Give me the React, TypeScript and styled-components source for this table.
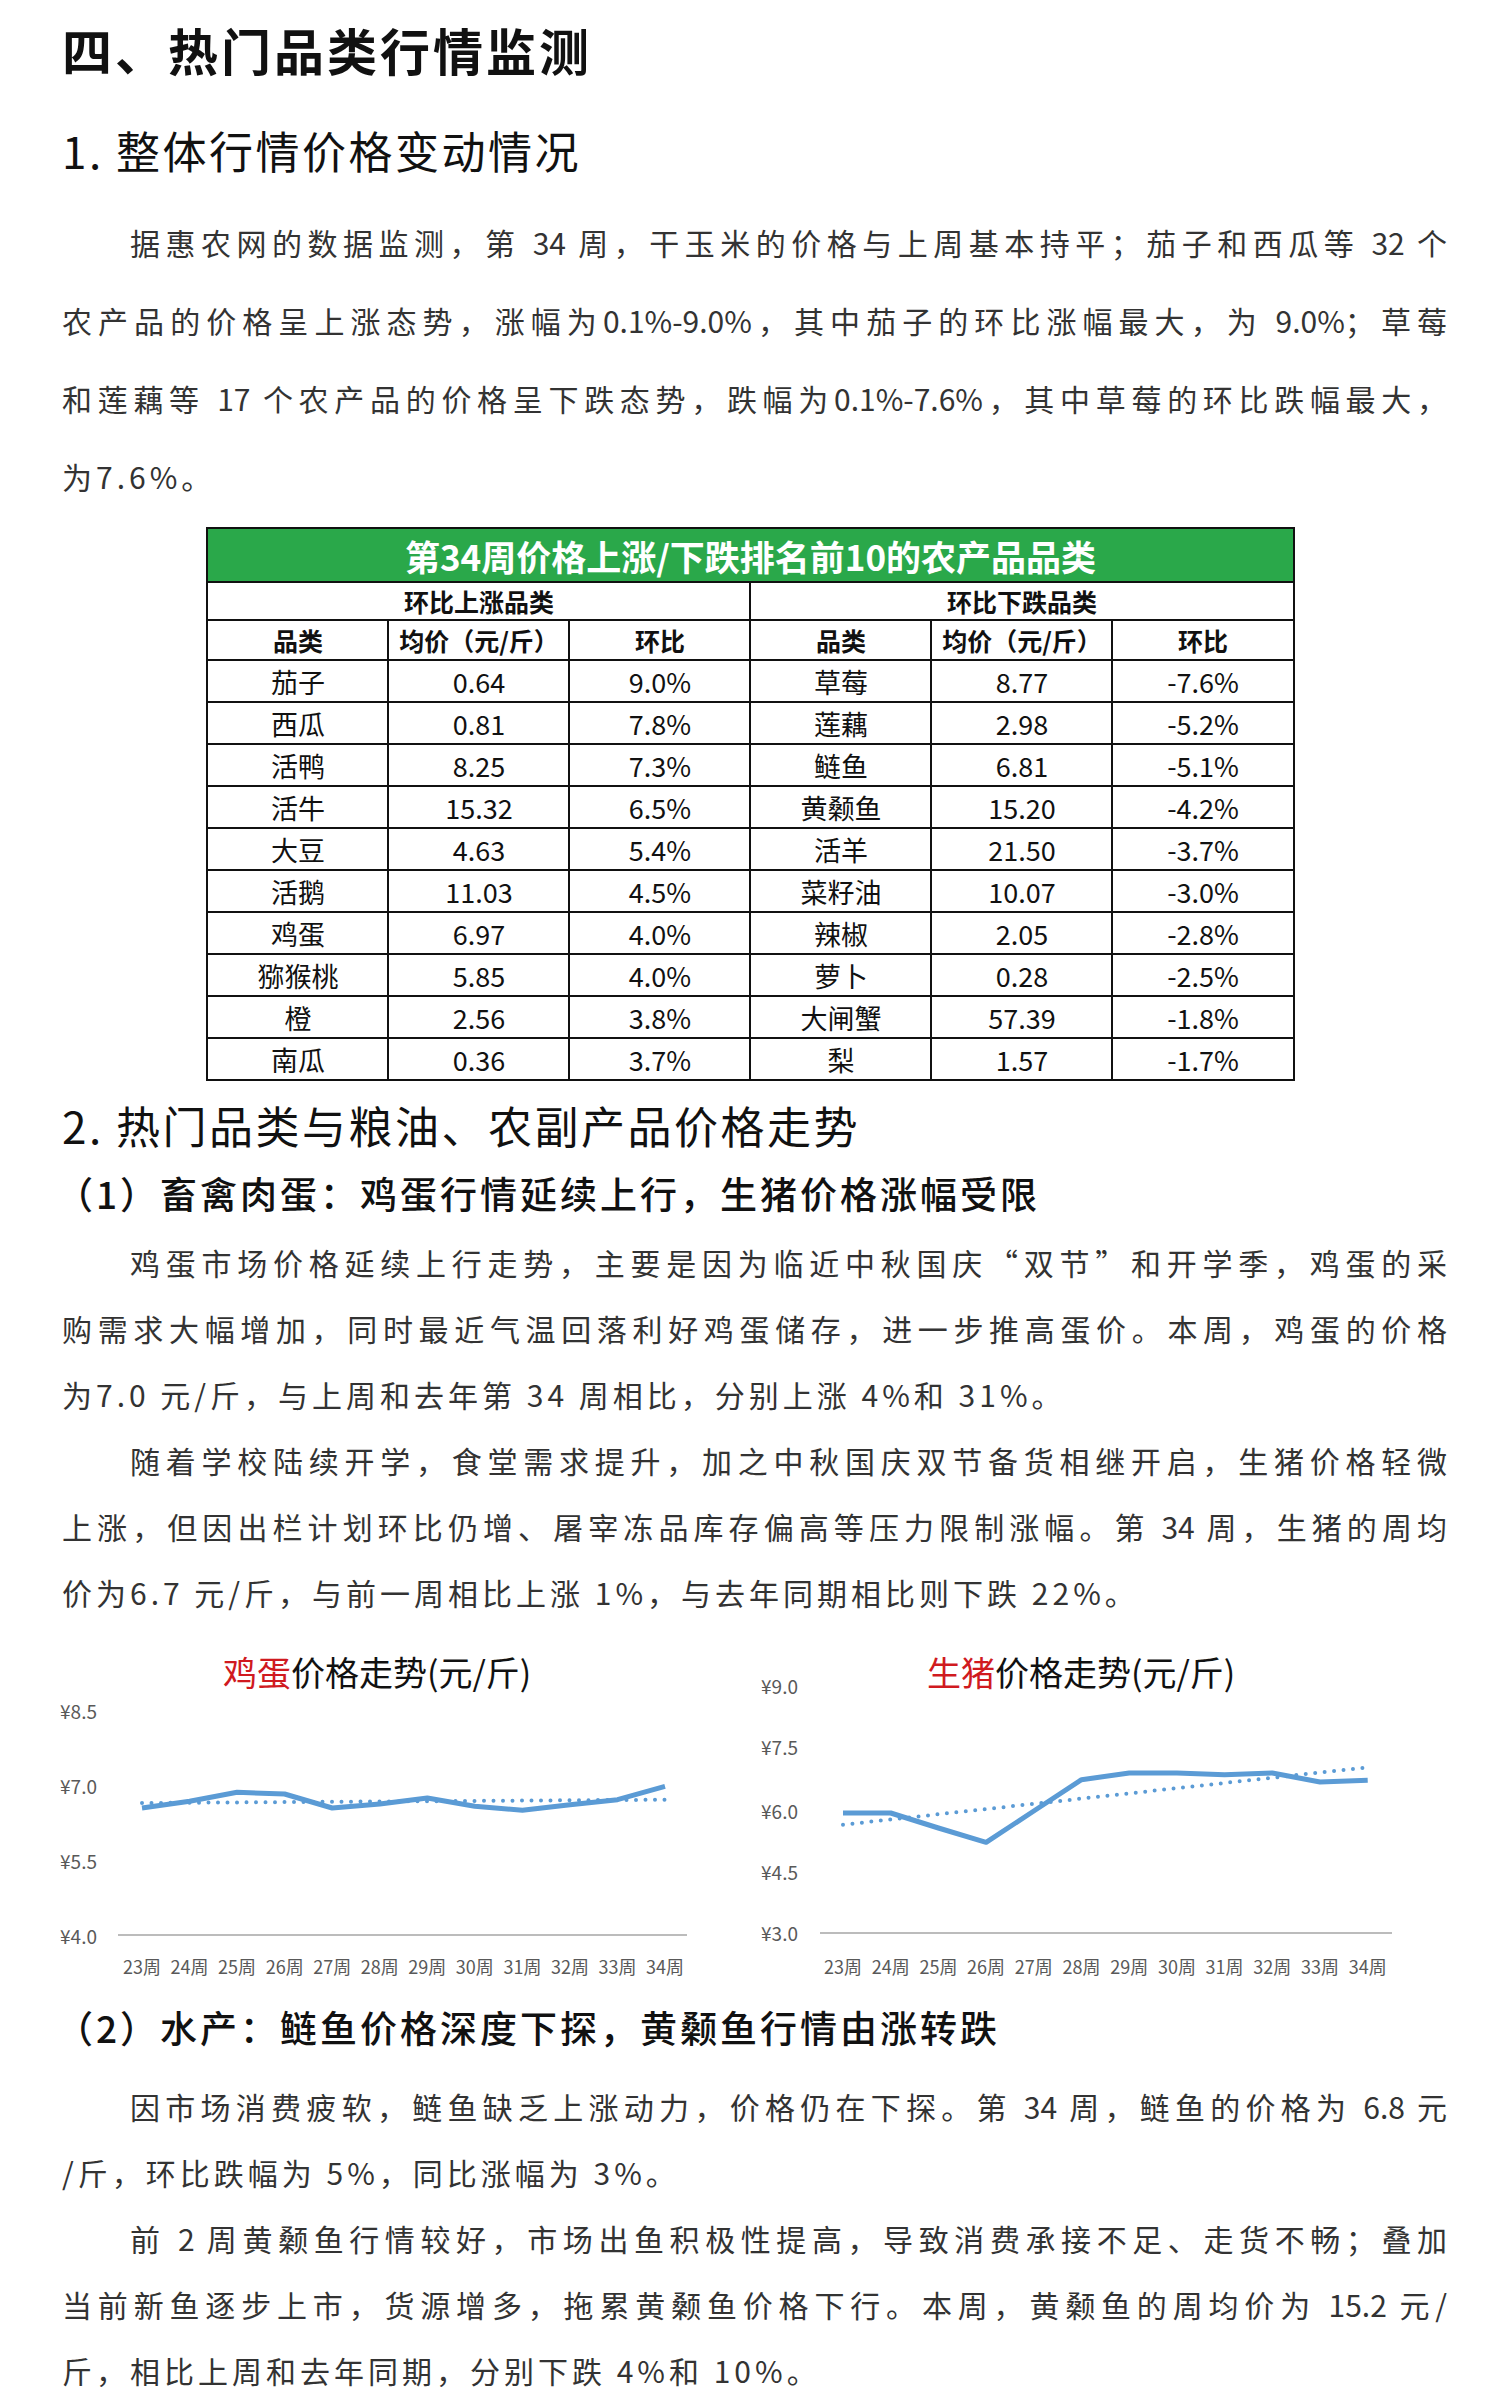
import styled, { createGlobalStyle } from 'styled-components';

const GlobalStyle = createGlobalStyle`
  html, body {
    margin: 0;
    padding: 0;
    background: #fff;
  }
  body {
    font-family: 'Noto Sans CJK SC', 'Noto Sans', sans-serif;
    color: #222;
  }
`;

const rising = [
  ['茄子', '0.64', '9.0%'],
  ['西瓜', '0.81', '7.8%'],
  ['活鸭', '8.25', '7.3%'],
  ['活牛', '15.32', '6.5%'],
  ['大豆', '4.63', '5.4%'],
  ['活鹅', '11.03', '4.5%'],
  ['鸡蛋', '6.97', '4.0%'],
  ['猕猴桃', '5.85', '4.0%'],
  ['橙', '2.56', '3.8%'],
  ['南瓜', '0.36', '3.7%'],
];

const falling = [
  ['草莓', '8.77', '-7.6%'],
  ['莲藕', '2.98', '-5.2%'],
  ['鲢鱼', '6.81', '-5.1%'],
  ['黄颡鱼', '15.20', '-4.2%'],
  ['活羊', '21.50', '-3.7%'],
  ['菜籽油', '10.07', '-3.0%'],
  ['辣椒', '2.05', '-2.8%'],
  ['萝卜', '0.28', '-2.5%'],
  ['大闸蟹', '57.39', '-1.8%'],
  ['梨', '1.57', '-1.7%'],
];

const weeks = ['23周', '24周', '25周', '26周', '27周', '28周', '29周', '30周', '31周', '32周', '33周', '34周'];

type ChartSpec = {
  red: string;
  rest: string;
  titleLeft: number;
  labelRight: number;
  yLabels: [string, number][];
  axis: { x1: number; x2: number; y: number };
  xStart: number;
  xStep: number;
  points: number[];
  trend: [number, number];
};

const eggChart: ChartSpec = {
  red: '鸡蛋',
  rest: '价格走势(元/斤)',
  titleLeft: 183,
  labelRight: 57,
  yLabels: [
    ['¥8.5', 82],
    ['¥7.0', 157],
    ['¥5.5', 232],
    ['¥4.0', 307],
  ],
  axis: { x1: 78, x2: 647, y: 307 },
  xStart: 102,
  xStep: 47.55,
  points: [180, 173.3, 164.3, 166, 180, 176, 170, 178.3, 182.3, 176.7, 171.7, 158.3],
  trend: [175, 171.7],
};

const porkChart: ChartSpec = {
  red: '生猪',
  rest: '价格走势(元/斤)',
  titleLeft: 187,
  labelRight: 58,
  yLabels: [
    ['¥9.0', 57],
    ['¥7.5', 118],
    ['¥6.0', 182],
    ['¥4.5', 243],
    ['¥3.0', 304],
  ],
  axis: { x1: 80, x2: 652, y: 305 },
  xStart: 103,
  xStep: 47.7,
  points: [185, 185, 200, 214.3, 183, 151.7, 145, 145, 146.7, 145, 154, 152.3],
  trend: [196.7, 139.3],
};

const PriceChart = ({ spec }: { spec: ChartSpec }) => {
  const xs = spec.points.map((_, i) => spec.xStart + i * spec.xStep);
  const path = spec.points.map((y, i) => `${i === 0 ? 'M' : 'L'}${xs[i].toFixed(1)} ${y}`).join(' ');
  const lastX = xs[xs.length - 1];

  return (
    <ChartCard>
      <ChartTitle $left={spec.titleLeft}>
        <TitleRed>{spec.red}</TitleRed>
        {spec.rest}
      </ChartTitle>
      <ChartSvg viewBox="0 -3 700 366" width={700} height={366}>
        {spec.yLabels.map(([label, y]) => (
          <text key={label} x={spec.labelRight} y={y} textAnchor="end" dominantBaseline="central" fontSize="19" fill="#595959">
            {label}
          </text>
        ))}
        <line x1={spec.axis.x1} x2={spec.axis.x2} y1={spec.axis.y} y2={spec.axis.y} stroke="#a6a6a6" strokeWidth="1.5" />
        {weeks.map((w, i) => (
          <text key={w} x={xs[i]} y={338} textAnchor="middle" dominantBaseline="central" fontSize="18" fill="#595959">
            {w}
          </text>
        ))}
        <path d={path} fill="none" stroke="#5b9bd5" strokeWidth="5" strokeLinejoin="round" />
        <line
          x1={xs[0]}
          x2={lastX}
          y1={spec.trend[0]}
          y2={spec.trend[1]}
          stroke="#5b9bd5"
          strokeWidth="4"
          strokeLinecap="round"
          strokeDasharray="0 9.5"
        />
      </ChartSvg>
    </ChartCard>
  );
};

type LineProps = { text: string; indent?: boolean; last?: boolean };

const Paragraph = ({ lines, tall }: { lines: LineProps[]; tall?: boolean }) => (
  <Para $tall={tall}>
    {lines.map((l, i) => (
      <Line key={i} $indent={l.indent} $last={l.last}>
        {l.text}
      </Line>
    ))}
  </Para>
);

const App = () => {
  return (
    <>
      <GlobalStyle />
      <Page>
        <PageTitle>四、热门品类行情监测</PageTitle>
        <SectionHeading $height={105}>1. 整体行情价格变动情况</SectionHeading>
        <Paragraph
          tall
          lines={[
            { text: '据惠农网的数据监测，第 34 周，干玉米的价格与上周基本持平；茄子和西瓜等 32 个', indent: true },
            { text: '农产品的价格呈上涨态势，涨幅为0.1%-9.0%，其中茄子的环比涨幅最大，为 9.0%；草莓' },
            { text: '和莲藕等 17 个农产品的价格呈下跌态势，跌幅为0.1%-7.6%，其中草莓的环比跌幅最大，' },
            { text: '为7.6%。', last: true },
          ]}
        />

        <RankTable>
          <colgroup>
            {Array.from({ length: 6 }).map((_, i) => (
              <col key={i} />
            ))}
          </colgroup>
          <thead>
            <tr>
              <TableTitle colSpan={6}>第34周价格上涨/下跌排名前10的农产品品类</TableTitle>
            </tr>
            <tr>
              <GroupHead colSpan={3}>环比上涨品类</GroupHead>
              <GroupHead colSpan={3}>环比下跌品类</GroupHead>
            </tr>
            <tr>
              {['品类', '均价（元/斤）', '环比', '品类', '均价（元/斤）', '环比'].map((h, i) => (
                <ColHead key={i}>{h}</ColHead>
              ))}
            </tr>
          </thead>
          <tbody>
            {rising.map((row, idx) => (
              <tr key={idx}>
                {[...row, ...falling[idx]].map((cell, i) => (
                  <Cell key={i}>{cell}</Cell>
                ))}
              </tr>
            ))}
          </tbody>
        </RankTable>

        <SectionHeading $height={64} $top={12}>
          2. 热门品类与粮油、农副产品价格走势
        </SectionHeading>
        <SubHeading>（1）畜禽肉蛋：鸡蛋行情延续上行，生猪价格涨幅受限</SubHeading>
        <Paragraph
          lines={[
            { text: '鸡蛋市场价格延续上行走势，主要是因为临近中秋国庆“双节”和开学季，鸡蛋的采', indent: true },
            { text: '购需求大幅增加，同时最近气温回落利好鸡蛋储存，进一步推高蛋价。本周，鸡蛋的价格' },
            { text: '为7.0 元/斤，与上周和去年第 34 周相比，分别上涨 4%和 31%。', last: true },
          ]}
        />
        <Paragraph
          lines={[
            { text: '随着学校陆续开学，食堂需求提升，加之中秋国庆双节备货相继开启，生猪价格轻微', indent: true },
            { text: '上涨，但因出栏计划环比仍增、屠宰冻品库存偏高等压力限制涨幅。第 34 周，生猪的周均' },
            { text: '价为6.7 元/斤，与前一周相比上涨 1%，与去年同期相比则下跌 22%。', last: true },
          ]}
        />

        <ChartRow>
          <PriceChart spec={eggChart} />
          <PriceChart spec={porkChart} />
        </ChartRow>

        <SubHeading $bottom={10}>（2）水产：鲢鱼价格深度下探，黄颡鱼行情由涨转跌</SubHeading>
        <Paragraph
          lines={[
            { text: '因市场消费疲软，鲢鱼缺乏上涨动力，价格仍在下探。第 34 周，鲢鱼的价格为 6.8 元', indent: true },
            { text: '/斤，环比跌幅为 5%，同比涨幅为 3%。', last: true },
          ]}
        />
        <Paragraph
          lines={[
            { text: '前 2 周黄颡鱼行情较好，市场出鱼积极性提高，导致消费承接不足、走货不畅；叠加', indent: true },
            { text: '当前新鱼逐步上市，货源增多，拖累黄颡鱼价格下行。本周，黄颡鱼的周均价为 15.2 元/' },
            { text: '斤，相比上周和去年同期，分别下跌 4%和 10%。', last: true },
          ]}
        />
      </Page>
    </>
  );
};

export default App;

const Page = styled.div`
  width: 1500px;
  height: 2405px;
  box-sizing: border-box;
  padding: 0 53px 0 62px;
  overflow: hidden;
`;

const PageTitle = styled.h1`
  margin: 0;
  height: 98px;
  line-height: 98px;
  font-size: 50px;
  font-weight: 700;
  color: #111;
  letter-spacing: 3px;
`;

const SectionHeading = styled.h2<{ $height: number; $top?: number }>`
  margin: ${p => p.$top ?? 0}px 0 0;
  height: ${p => p.$height}px;
  line-height: ${p => p.$height}px;
  font-size: 44px;
  font-weight: 400;
  color: #111;
  letter-spacing: 2.5px;
`;

const SubHeading = styled.h3<{ $bottom?: number }>`
  margin: 0 0 ${p => p.$bottom ?? 0}px;
  height: 72px;
  line-height: 72px;
  font-size: 37px;
  font-weight: 500;
  color: #111;
  margin-left: -6px;
  letter-spacing: 3px;
`;

const Para = styled.div<{ $tall?: boolean }>`
  font-size: 30px;
  line-height: ${p => (p.$tall ? 78 : 66)}px;
  color: #333;
`;

const Line = styled.div<{ $indent?: boolean; $last?: boolean }>`
  text-indent: ${p => (p.$indent ? 68 : 0)}px;
  text-align: justify;
  text-align-last: ${p => (p.$last ? 'left' : 'justify')};
  letter-spacing: ${p => (p.$last ? 4 : 0)}px;
  white-space: pre;
`;

const RankTable = styled.table`
  width: 1087px;
  margin: 12px auto 0;
  position: relative;
  left: -4px;
  border-collapse: collapse;
  table-layout: fixed;
  color: #111;
  & col {
    width: 181px;
  }
  & td,
  & th {
    border: 2px solid #111;
    padding: 0;
    text-align: center;
    vertical-align: middle;
  }
`;

const TableTitle = styled.th`
  height: 52px;
  background: #2aa84a;
  color: #fff;
  font-size: 35px;
  font-weight: 700;
`;

const GroupHead = styled.th`
  height: 35px;
  font-size: 25px;
  font-weight: 700;
`;

const ColHead = styled.th`
  height: 38px;
  font-size: 25px;
  font-weight: 700;
`;

const Cell = styled.td`
  height: 40px;
  font-size: 27px;
  font-weight: 400;
`;

const ChartRow = styled.div`
  display: grid;
  grid-template-columns: 700px 700px;
  margin-left: -22px;
  height: 366px;
`;

const ChartCard = styled.div`
  display: grid;
  width: 700px;
  height: 366px;
  & > * {
    grid-area: 1 / 1;
  }
`;

const ChartTitle = styled.div<{ $left: number }>`
  align-self: start;
  padding: 22px 0 0 ${p => p.$left}px;
  height: 50px;
  line-height: 50px;
  font-size: 34px;
  color: #111;
  white-space: nowrap;
  z-index: 1;
`;

const TitleRed = styled.span`
  color: #d01a1f;
`;

const ChartSvg = styled.svg`
  display: block;
  font-family: 'Noto Sans CJK SC', 'Noto Sans', sans-serif;
`;
